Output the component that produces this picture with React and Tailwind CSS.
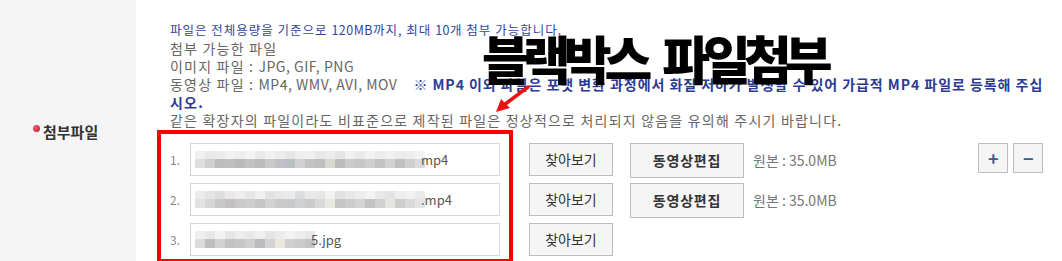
import React from 'react';

const FONT = "font-['Noto_Sans_CJK_KR','Noto_Sans',sans-serif]";

// pixelated blur over the file names
const mosaics = [
  {
    top: ['#f0f0f0', '#e8e8e8', '#ececec', '#f2f2f2', '#eeeeee', '#f3f3f3', '#e9e9e9', '#f1f1f1', '#ececec', '#e6e6e6', '#efefef', '#f0f0f0', '#e8e8e8', '#ececec', '#e5e5e5', '#f0f0f0', '#eaeaea', '#f2f2f2', '#ededed', '#f1f1f1', '#ececec', '#eeeeee', '#f2f2f2'],
    bottom: ['#dedede', '#cfcfcf', '#bdbdbd', '#c0c0c0', '#b9b9b9', '#c2c2c2', '#bcbcbc', '#c9c9c9', '#c0c0c8', '#b8c0c2', '#d0d0d0', '#c3c3c3', '#bfbfbf', '#d9d9cf', '#bcbcbc', '#cbcbcb', '#c7c7c7', '#d0cece', '#c3c3c3', '#d2d2d2', '#c0c0c0', '#cfcfcf', '#dadada'],
    suffix: 'mp4',
  },
  {
    top: ['#ececec', '#e4e4e4', '#dedede', '#e9e9e9', '#eeeeee', '#e6e6e6', '#f0f0f0', '#e2e2e2', '#e8e8e8', '#eaeaea', '#dddddd', '#e9e9e9', '#e6e6e6', '#f2f2f2', '#e1e1e1', '#e7e7e7', '#ececec', '#f3f3f3', '#e8e8e8', '#e4e4e4', '#eeeeee', '#f1f1f1', '#e9e9e9'],
    bottom: ['#e2e2e2', '#d6d6d6', '#c8c8c8', '#c4c0c0', '#c9c9c9', '#cdcdcd', '#c6c6c6', '#d2d2d2', '#cacaca', '#c5cacc', '#d0d0d0', '#cbcbcb', '#d8d8d8', '#e8e8e0', '#c6c6c6', '#cccccc', '#d4d4d4', '#c3c3c3', '#d0d0d0', '#e6e6e0', '#cdcdcd', '#d9d9d9', '#e4e4e4'],
    suffix: '.mp4',
  },
  {
    top: ['#eeeeee', '#e8e8e8', '#f2f2f2', '#e6e6e6', '#eeeeee', '#e9e9e9', '#f0f0f0', '#e4e4e4', '#ececec', '#f2f2f2', '#eeeeee', '#e7e7e7'],
    bottom: ['#dcdcdc', '#bfbfbf', '#d2d2d2', '#c2c2c2', '#c6c6c6', '#cfcfcf', '#bcbcc0', '#d4d4d4', '#ebe9df', '#d0d0d0', '#cbcbcb', '#c4c4c4'],
    suffix: '5.jpg',
  },
];

const Mosaic = ({ top, bottom }) => (
  <div className="flex flex-col">
    <div className="flex">
      {top.map((c, i) => (
        <span key={i} className="w-[10px] h-[8px]" style={{ backgroundColor: c }} />
      ))}
    </div>
    <div className="flex">
      {bottom.map((c, i) => (
        <span key={i} className="w-[10px] h-[9px]" style={{ backgroundColor: c }} />
      ))}
    </div>
  </div>
);

// latin runs keep a tighter spacing than the hangul around them
const L = ({ children }) => <span className="tracking-[0.5px]">{children}</span>;

const FileRow = ({ index, file, showEdit, showPlusMinus }) => (
  <div className="flex items-start h-[33px]">
    <span className="w-[20px] pt-[8px] text-[12px] text-[#888]">{index}.</span>
    <div className="w-[310px] h-[33px] border border-[#d6d6d6] bg-white flex items-center pl-[4px]">
      <Mosaic top={file.top} bottom={file.bottom} />
      <span className="text-[13px] text-[#555] -ml-[4px]">{file.suffix}</span>
    </div>
    <button className="ml-[29px] w-[84px] h-[33px] border border-[#bcbcbc] bg-[#f5f5f5] text-[14px] text-[#333]">
      찾아보기
    </button>
    {showEdit && (
      <>
        <button className="ml-[17px] w-[114px] h-[35px] border border-[#bcbcbc] bg-[#f5f5f5] text-[14px] tracking-[0.8px] font-bold text-[#333]">
          동영상편집
        </button>
        <span className="ml-[9px] pt-[7px] text-[14px] text-[#777]">원본 : 35.0MB</span>
      </>
    )}
    {showPlusMinus && (
      <div className="ml-auto flex gap-[5px]">
        <button className="w-[30px] h-[30px] border border-[#bcbcbc] bg-[#f5f5f5] text-[18px] leading-none font-bold text-[#3b5b8c]">
          +
        </button>
        <button className="w-[30px] h-[30px] border border-[#bcbcbc] bg-[#f5f5f5] text-[18px] leading-none font-bold text-[#3b5b8c]">
          −
        </button>
      </div>
    )}
  </div>
);

export default function App() {
  return (
    <div className={`${FONT} relative w-[1062px] h-[261px] overflow-hidden flex bg-white`}>
      {/* label column */}
      <aside className="w-[136px] flex-shrink-0 bg-[#f5f5f5] pt-[121px] pl-[33px]">
        <div className="flex items-start">
          <span className="mt-[4px] w-[7px] h-[7px] rounded-full bg-[radial-gradient(circle_at_35%_35%,#f06070,#c8102e)]" />
          <span className="ml-[3px] text-[15px] font-bold text-[#333]">첨부파일</span>
        </div>
      </aside>

      {/* content */}
      <div className="flex-1 pl-[34px] pr-[27px] pt-[21px]">
        <div className="text-[14px] leading-[18px] tracking-[1.2px] text-[#666] whitespace-nowrap">
          <p className="text-[12.5px] tracking-[1px] text-[#34449c]">
            파일은 전체용량을 기준으로 <L>120MB</L>까지, 최대 <L>10</L>개 첨부 가능합니다.
          </p>
          <p>첨부 가능한 파일</p>
          <p>
            이미지 파일 : <L>JPG, GIF, PNG</L>
          </p>
          <p>
            동영상 파일 : <L>MP4, WMV, AVI, MOV</L>
            <span className="ml-[16px] font-bold tracking-[0.95px] text-[#2c3b92]">
              ※ MP4 이외 파일은 포맷 변환 과정에서 화질 저하가 발생할 수 있어 가급적 MP4 파일로 등록해 주십
            </span>
          </p>
          <p className="font-bold text-[#2c3b92]">시오.</p>
          <p>같은 확장자의 파일이라도 비표준으로 제작된 파일은 정상적으로 처리되지 않음을 유의해 주시기 바랍니다.</p>
        </div>

        <div className="relative mt-[14px] flex flex-col gap-[7px]">
          {/* red annotation box */}
          <div className="absolute -top-[13px] -left-[13px] w-[356px] h-[133px] border-4 border-[#ff0000] pointer-events-none" />
          <FileRow index={1} file={mosaics[0]} showEdit showPlusMinus />
          <FileRow index={2} file={mosaics[1]} showEdit />
          <FileRow index={3} file={mosaics[2]} />
        </div>
      </div>

      {/* big caption overlay */}
      <div className="absolute left-[482px] top-[27px] text-[52px] leading-[1.2] font-black tracking-[-7px] [word-spacing:12px] text-black whitespace-nowrap">
        블랙박스 파일첨부
      </div>

      {/* red arrow */}
      <svg className="absolute left-[490px] top-[82px]" width="44" height="34" viewBox="0 0 44 34">
        <line x1="38" y1="5" x2="14" y2="23" stroke="#ee1111" strokeWidth="3.5" strokeLinecap="round" />
        <polygon points="6,30 11,17 20,26" fill="#ee1111" />
      </svg>
    </div>
  );
}
